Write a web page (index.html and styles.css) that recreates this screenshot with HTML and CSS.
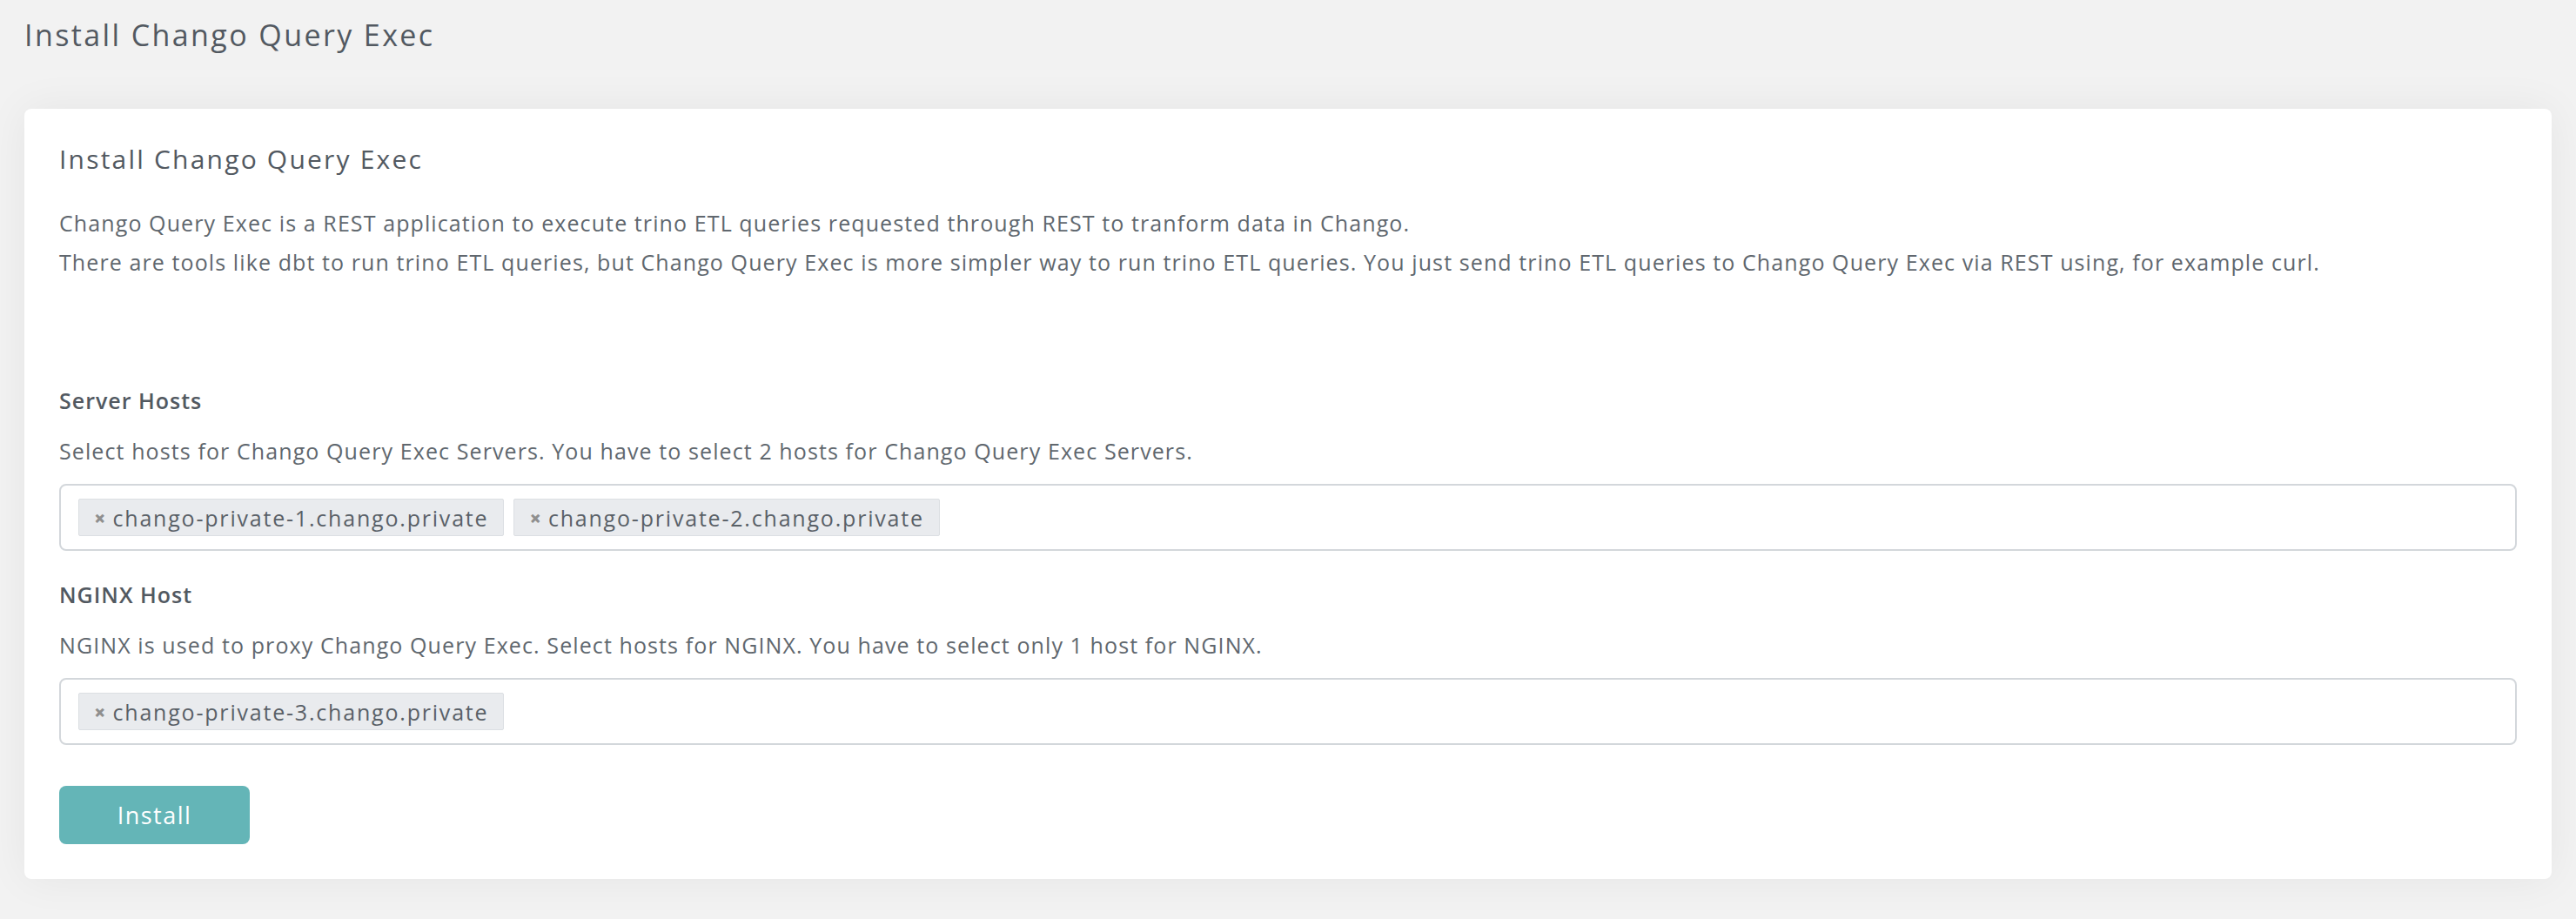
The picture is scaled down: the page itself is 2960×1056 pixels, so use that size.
FILE: index.html
```html
<!DOCTYPE html>
<html lang="en">

<head>
  <meta charset="UTF-8">
  <meta name="viewport" content="width=device-width, initial-scale=1.0">
  <title>Install Chango Query Exec</title>
  <link rel="stylesheet" href="styles.css">
</head>

<body>
  <div class="page">
    <h1 class="page-title">Install Chango Query Exec</h1>

    <div class="card">
      <h2 class="card-title">Install Chango Query Exec</h2>
      <p class="intro">
        Chango Query Exec is a REST application to execute trino ETL queries requested through REST to tranform data in Chango.<br>
        There are tools like dbt to run trino ETL queries, but Chango Query Exec is more simpler way to run trino ETL queries. You just send trino ETL queries to Chango Query Exec via REST using, for example curl.
      </p>

      <form class="install-form" id="installForm">
        <div class="form-group">
          <label>Server Hosts</label>
          <div class="help">Select hosts for Chango Query Exec Servers. You have to select 2 hosts for Chango Query Exec Servers.</div>
          <div class="tag-input">
            <span class="tag"><span class="tag-x">×</span>chango-private-1.chango.private</span>
            <span class="tag"><span class="tag-x">×</span>chango-private-2.chango.private</span>
          </div>
        </div>
        <div class="form-group">
          <label>NGINX Host</label>
          <div class="help">NGINX is used to proxy Chango Query Exec. Select hosts for NGINX. You have to select only 1 host for NGINX.</div>
          <div class="tag-input">
            <span class="tag"><span class="tag-x">×</span>chango-private-3.chango.private</span>
          </div>
        </div>
        <button type="submit" class="btn-install">Install</button>
      </form>
    </div>
  </div>
</body>
</html>
```

FILE: styles.css
```css
:root {
  --text-color: #60676e;
  --heading-color: #525961;
  --accent: #64b5b7;
  --radius: 8px;
}
html {
  font-family: "Open Sans", "Noto Sans", Arial, sans-serif;
}
body {
  margin: 0;
  background: #f2f2f2;
  color: var(--text-color);
}
.page {
  padding: 16px 28px 44px;
}
.page-title {
  margin: 0;
  font-size: 34px;
  font-weight: 500;
  line-height: 48px;
  letter-spacing: 2.4px;
  color: var(--heading-color);
}
.card {
  margin-top: 61px;
  background: #fff;
  border-radius: var(--radius);
  box-shadow: 0 0 50px rgba(0,0,0,.06);
  padding: 36px 40px 40px;
}
.card-title {
  margin: 0;
  font-size: 30px;
  font-weight: 500;
  line-height: 44px;
  letter-spacing: 2.2px;
  color: var(--heading-color);
}
.intro {
  margin: 29px 0 0;
  font-size: 25px;
  line-height: 45px;
  letter-spacing: 1.1px;
}
.install-form { display: flex; flex-direction: column; margin-top: 118px; }
.form-group { display: flex; flex-direction: column; margin-bottom: 32px; }
.form-group label {
  font-size: 25px; font-weight: 600; line-height: 36px;
  letter-spacing: 1px;
  color: var(--heading-color);
}
.help { margin-top: 22px; font-size: 25px; line-height: 36px; letter-spacing: 1.1px; }
.tag-input {
  margin-top: 20px;
  display: flex; flex-wrap: wrap; gap: 11px;
  border: 2px solid #d3d7db; border-radius: var(--radius);
  padding: 15px 20px;
  min-height: 43px;
}
.tag {
  display: inline-flex; align-items: center;
  height: 43px; box-sizing: border-box;
  padding: 0 17px;
  background: #e9ebee; border: 1px solid #dcdfe3; border-radius: 2px;
  font-size: 25px; color: #596067; letter-spacing: 1.8px;
}
.tag-x { color: #8f8f8f; font-weight: 800; font-size: 23px; margin-right: 8px; letter-spacing: 0; }
.btn-install {
  align-self: flex-start;
  width: 219px; height: 67px;
  margin-top: 15px;
  background: var(--accent); color: #fff;
  border: none; border-radius: var(--radius);
  font-family: inherit; font-size: 27px; letter-spacing: 1.5px; cursor: pointer;
}
```
